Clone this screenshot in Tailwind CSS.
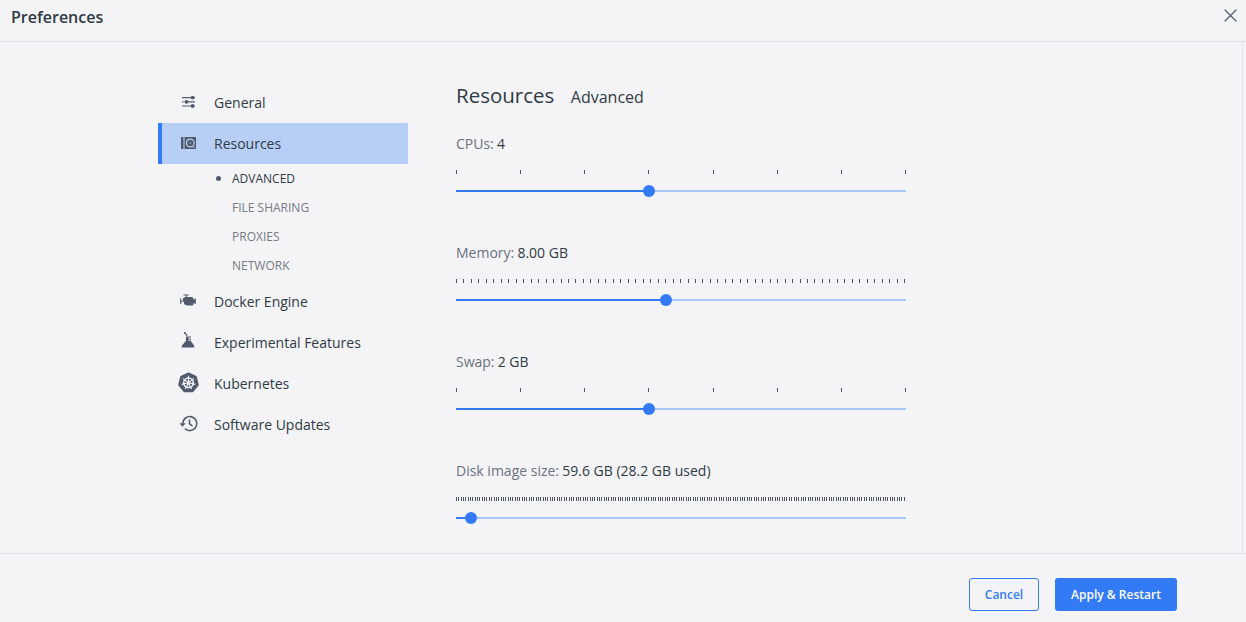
<!DOCTYPE html>
<html lang="en">
<head>
<meta charset="utf-8">
<title>Preferences</title>
<script src="https://cdn.jsdelivr.net/npm/@tailwindcss/browser@4"></script>
</head>
<body class="h-[622px] w-[1246px] overflow-hidden bg-[#f4f4f6] font-['Open_Sans','Noto_Sans',sans-serif] text-[#2f3a45]">
<div class="flex h-full flex-col">
  <header class="flex h-[42px] shrink-0 items-start justify-between border-b border-[#dfe0e4] pl-[11px] pr-[9px]">
    <h1 class="pt-[5px] text-[16px] leading-6 font-semibold">Preferences</h1>
    <svg class="mt-[9px]" width="13" height="13" viewBox="0 0 13 13" stroke="#505a6c" stroke-width="1.2" stroke-linecap="round"><path d="M1 1l11 11M12 1L1 12"/></svg>
  </header>
  <main class="mr-[3px] flex h-[511px] shrink-0 border-r border-[#e3e4e8] pl-[158px]">
    <nav class="w-[250px] pt-10 text-[14px]">
      <a class="flex h-[41px] items-center pl-5"><svg class="-mt-px mr-[14px]" width="22" height="22" viewBox="0 0 22 22" fill="#505a6c"><path d="M4 6h13v1.2H4zM4 10.2h1.500v1.2H4zM6.500 10.200h10.500v1.2H6.500zM4 14.4h13v1.2H4z"/><circle cx="14.600" cy="6.6" r="1.9"/><circle cx="8.5" cy="10.8" r="1.9"/><circle cx="14.600" cy="15" r="1.9"/></svg>General</a>
      <a class="flex h-[41px] items-center border-l-4 border-[#337af7] bg-[#b7cff6] pl-4"><svg class="-mt-px mr-[14px]" width="22" height="22" viewBox="0 0 22 22"><path fill="#505a6c" d="M3 5h2.500v12H3zM6.500 5H18v12H6.500z"/><circle cx="12.300" cy="11" r="3.900" fill="none" stroke="#b7cff6" stroke-width="1.300"/><circle cx="12.300" cy="11" r="1.100" fill="#8494b3"/><path d="M15.200 15.300h1.500" stroke="#b7cff6"/></svg>Resources</a>
      <div class="flex flex-col pb-[1px] text-[12px] text-[#777b82]">
        <a class="flex h-[29px] items-center pl-[58px] text-[#2f3a45]"><span class="mr-[11px] size-[5px] rounded-full bg-[#505a6c]"></span>ADVANCED</a>
        <a class="flex h-[29px] items-center pl-[74px]">FILE SHARING</a>
        <a class="flex h-[29px] items-center pl-[74px]">PROXIES</a>
        <a class="flex h-[29px] items-center pl-[74px]">NETWORK</a>
      </div>
      <a class="flex h-[41px] items-center pl-5"><svg class="-mt-px mr-[14px]" width="22" height="22" viewBox="0 0 22 22" fill="#505a6c"><path d="M5.500 4.500h5.300v1H8.800v1.600h5.400l1.300 1.300v1.100h1V8.600h1.300v5.400h-1.300v-1h-1v1.800l-1 .7H9.500L6 14.200v-2.400H3.300v2.200H2.200V8.300h1.100v2.400H5V8.300l2-1.200h.8V5.500H5.500z"/></svg>Docker Engine</a>
      <a class="flex h-[41px] items-center pl-5"><svg class="-mt-px mr-[14px]" width="22" height="22" viewBox="0 0 22 22" fill="#505a6c"><path d="M8 5.500H13v1H10.300v1.200H13v1H10.300v1.100H12.700L16.200 14.800V16.500H3.800v-1.700L8 9.800z"/><circle cx="7" cy="2.200" r="1.100"/><circle cx="8.600" cy="4" r=".9"/></svg>Experimental Features</a>
      <a class="flex h-[41px] items-center pl-5"><svg class="-mt-px mr-[14px]" width="22" height="22" viewBox="0 0 22 22"><path fill="#505a6c" stroke="#505a6c" stroke-linejoin="round" stroke-width="2" d="M10.500 1.500l7.400 3.500 1.900 7.900-5.100 6.300H6.300l-5.100-6.300L3.100 5z"/><g stroke="#f4f4f6" fill="none"><circle cx="10.500" cy="10.800" r="4.800" stroke-width="1.500"/><path stroke-width="1.100" d="M10.500 10.800V3.800M10.500 10.800l5.500-4.400M10.500 10.800l6.800 1.600M10.500 10.800l3 6.300M10.500 10.800l-3 6.300M10.500 10.800l-6.800 1.600M10.500 10.800L5 6.400"/></g></svg>Kubernetes</a>
      <a class="flex h-[41px] items-center pl-5"><svg class="-mt-px mr-[14px]" width="22" height="22" viewBox="0 0 22 22" fill="none" stroke="#505a6c" stroke-width="1.600"><path d="M4.800 10.500a7 7 0 1 1 2 5M11.500 6.500v4.400l3 2"/><path d="M1.400 10.300h6.400l-3.200 3.400z" fill="#505a6c" stroke="none"/></svg>Software Updates</a>
    </nav>
    <section class="ml-12 w-[450px] pt-[38px]">
      <div class="flex h-8 items-baseline"><h2 class="text-[20.5px] leading-[31px]">Resources</h2><span class="ml-[16.5px] text-[16px]">Advanced</span></div>
      <div class="flex flex-col pt-[20px] text-[14px]">
        <div class="h-[109px]"><p class="h-[24px] leading-6 text-[#6a7180]">CPUs: <span class="-ml-[0.5px] text-[#2f3a45]">4</span></p><svg data-n="7" data-step="64.14" data-off=".45" data-at="193" class="mt-[11px] block" width="450" height="30"></svg></div>
        <div class="h-[109px]"><p class="h-[24px] leading-6 text-[#6a7180]">Memory: <span class="-ml-[0.5px] text-[#2f3a45]">8.00 GB</span></p><svg data-n="60" data-step="7.47" data-off=".43" data-at="210" class="mt-[11px] block" width="450" height="30"></svg></div>
        <div class="h-[109px]"><p class="h-[24px] leading-6 text-[#6a7180]">Swap: <span class="-ml-[0.5px] text-[#2f3a45]">2 GB</span></p><svg data-n="7" data-step="64.14" data-off=".45" data-at="193" class="mt-[11px] block" width="450" height="30"></svg></div>
        <div><p class="h-[24px] leading-6 text-[#6a7180]">Disk image size: <span class="-ml-[0.5px] text-[#2f3a45]">59.6 GB (28.2 GB used)</span></p><svg data-n="191" data-step="2.34375" data-off=".51" data-at="15" class="mt-[11px] block" width="450" height="30"></svg></div>
      </div>
    </section>
  </main>
  <footer class="flex flex-1 items-start justify-end gap-4 border-t border-[#dfe0e4] pt-6 pr-[69px] text-[12px] font-semibold">
    <button class="h-[33px] w-[70px] rounded-[3px] border border-[#337af7] text-[#337af7]">Cancel</button>
    <button class="h-[33px] w-[122px] rounded-[3px] bg-[#337af7] text-white">Apply &amp; Restart</button>
  </footer>
</div>
<script>
for (const s of document.querySelectorAll('svg[data-n]')) {
  const { n, step, off, at } = s.dataset;
  let d = '';
  for (let i = 0; i <= +n; i++) d += `M${Math.floor(i * step + +off)} 3h1v4h-1z`;
  s.innerHTML = `<path d="${d}" fill="#4c5465"/><path d="M0 23h450v2H0z" fill="#a6c5fa"/><path d="M0 23h${at}v2H0z" fill="#337af7"/><circle cx="${at}" cy="24" r="6" fill="#337af7"/>`;
}
</script>
</body>
</html>
